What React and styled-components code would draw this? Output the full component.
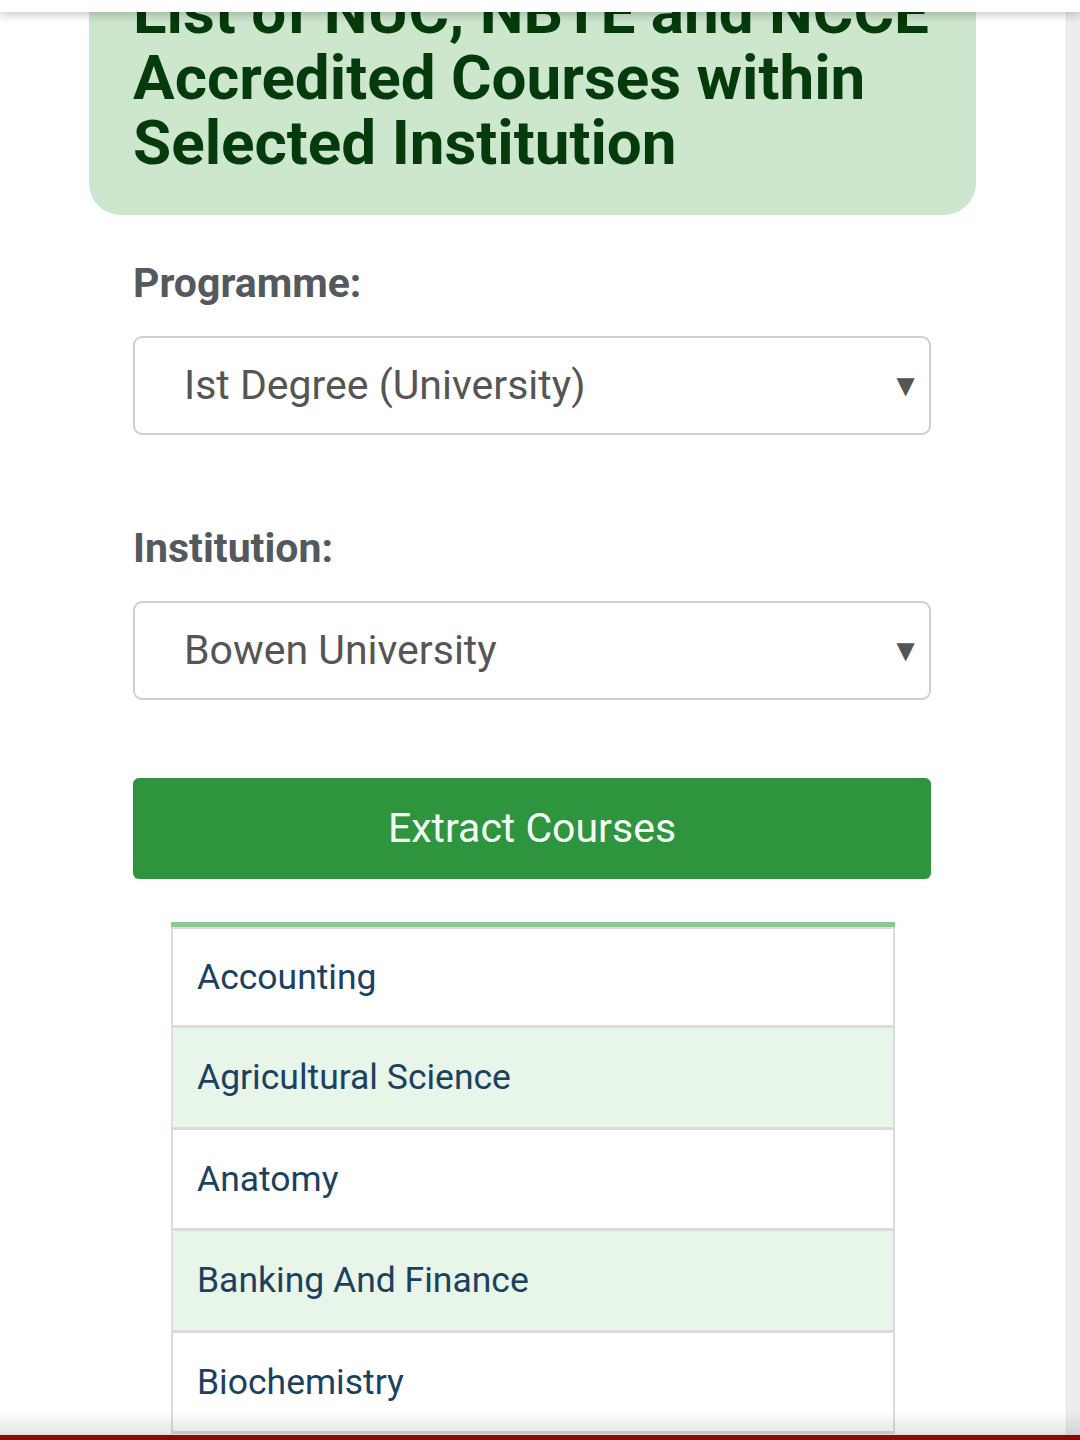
import React from "react";
import styled, { createGlobalStyle } from "styled-components";

const Global = createGlobalStyle`
  html, body { margin: 0; padding: 0; background: #ffffff; }
  body { font-family: Roboto, "Noto Sans", "Liberation Sans", sans-serif; overflow: hidden; }
  * { box-sizing: border-box; }
`;

const Page = styled.div`
  position: relative;
  width: 1080px;
  height: 1440px;
  overflow: hidden;
  background: #fff;
  display: flex;
`;

const Main = styled.main`
  flex: 1;
  display: flex;
  flex-direction: column;
  padding: 0 0 0 89px;
`;

const Scrollbar = styled.div`
  width: 14px;
  background: #ededed;
  border-left: 1px solid #e4e4e4;
`;

const TopBar = styled.div`
  position: absolute;
  top: 0;
  left: 0;
  right: 0;
  height: 12px;
  background: #fff;
  box-shadow: 0 3px 10px rgba(0, 0, 0, 0.22);
  z-index: 5;
`;

const BottomBar = styled.div`
  position: absolute;
  left: 0;
  right: 0;
  bottom: 0;
  height: 30px;
  background: linear-gradient(to bottom, rgba(0,0,0,0) 0%, rgba(0,0,0,0.10) 80%, rgba(0,0,0,0.16) 83%);
  z-index: 5;
  &::after {
    content: "";
    position: absolute;
    left: 0;
    right: 0;
    bottom: 0;
    height: 5px;
    background: #8e0606;
  }
`;

const TitleCard = styled.section`
  width: 887px;
  margin-top: -21px;
  padding: 0 16px 39px 44px;
  background: #cde6ce;
  border-radius: 0 0 32px 32px;
`;

const Title = styled.h1`
  margin: 0;
  font-size: 62px;
  line-height: 65.5px;
  font-weight: 700;
  color: #053a0a;
`;

const Form = styled.div`
  width: 798px;
  margin-left: 44px;
  display: flex;
  flex-direction: column;
`;

const Label = styled.div`
  font-size: 41px;
  font-weight: 700;
  color: #54595e;
  line-height: 46px;
  margin-top: ${(p) => p.$top}px;
`;

const SelectBox = styled.div`
  margin-top: 30px;
  height: 99px;
  border: 2px solid #cfcfcf;
  border-radius: 9px;
  display: flex;
  align-items: center;
  justify-content: space-between;
  padding: 0 8px 0 49px;
  font-size: 41px;
  color: #555;
`;

const Arrow = styled.span`
  font-size: 31px;
  color: #555;
  line-height: 1;
`;

const Button = styled.button`
  margin-top: 78px;
  height: 101px;
  border: none;
  border-radius: 6px;
  background: #2e943e;
  color: #f6fff6;
  font-family: inherit;
  font-size: 41px;
  font-weight: 400;
  padding: 0;
`;

const List = styled.ul`
  list-style: none;
  margin: 43px 0 0 38px;
  padding: 0;
  width: 724px;
  border-top: 5px solid #8cc891;
`;

const Item = styled.li`
  height: 101.5px;
  display: flex;
  align-items: center;
  padding-left: 24px;
  border: 2px solid #dcdcdc;
  border-top: ${(p) => (p.$first ? "2px solid #dcdcdc" : "none")};
  border-bottom-width: 3px;
  background: ${(p) => (p.$alt ? "#e8f5e9" : "#ffffff")};
  color: #1c4160;
  font-size: 35.5px;
`;

const courses = [
  "Accounting",
  "Agricultural Science",
  "Anatomy",
  "Banking And Finance",
  "Biochemistry",
];

export default function App() {
  return (
    <>
      <Global />
      <Page>
        <TopBar />
        <Main>
          <TitleCard>
            <Title>
              List of NUC, NBTE and NCCE
              <br />
              Accredited Courses within
              <br />
              Selected Institution
            </Title>
          </TitleCard>
          <Form>
            <Label $top={45}>Programme:</Label>
            <SelectBox>
              <span>Ist Degree (University)</span>
              <Arrow>▼</Arrow>
            </SelectBox>
            <Label $top={90}>Institution:</Label>
            <SelectBox>
              <span>Bowen University</span>
              <Arrow>▼</Arrow>
            </SelectBox>
            <Button>Extract Courses</Button>
            <List>
              {courses.map((c, i) => (
                <Item key={c} $first={i === 0} $alt={i % 2 === 1}>
                  {c}
                </Item>
              ))}
            </List>
          </Form>
        </Main>
        <Scrollbar />
        <BottomBar />
      </Page>
    </>
  );
}
